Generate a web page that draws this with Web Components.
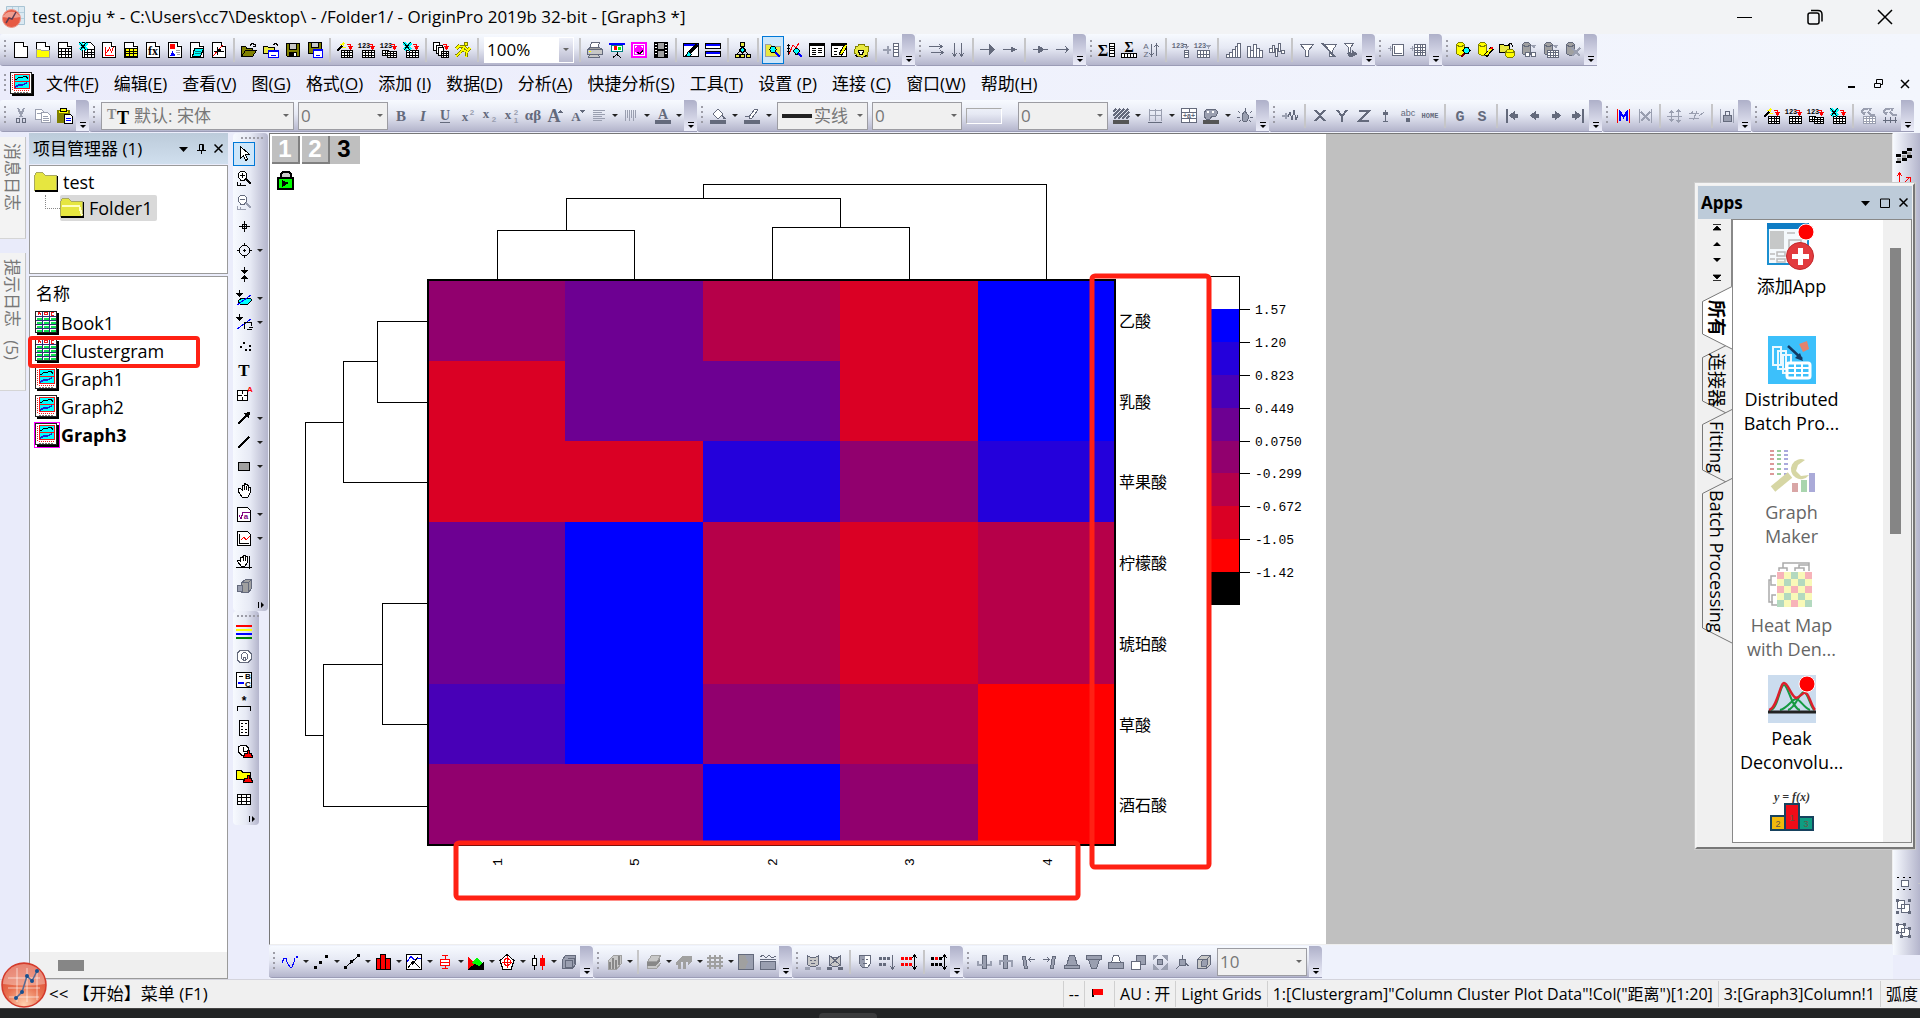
<!DOCTYPE html>
<html lang="zh-CN">
<head>
<meta charset="utf-8">
<title>OriginPro 2019b</title>
<style>
html,body{height:100%;margin:0}
body{font:17px/24px "Open Sans","Noto Sans CJK SC",sans-serif;color:#000;background:#ebedfb;overflow:hidden}
</style>
</head>
<body>
<origin-app></origin-app>
<script>
const COL={k:'#000',g:'#646a7c',d:'#9a9fb0',w:'#fff',y:'#ffff00',r:'#f00',b:'#00f',c:'#0ff',m:'#f0f',n:'none',o:'#808000',s:'#c8c8c8',e:'#e8e840',a:'#a0a0a0',G:'#0f0',v:'#800080',t:'#008080'};
const col=c=>COL[c]||c;
function shapes(s){
  return s.split(';').filter(Boolean).map(p=>{
    const a=p.split('|');
    if(a[0]==='T')return `<text x="${a[2]}" y="${a[3]}" font-size="${a[4]}" font-weight="${a[5]}" font-family="${a[7]||'Liberation Sans'}" fill="${col(a[1])}" stroke="none" text-anchor="middle">${a[6]}</text>`;
    return `<path stroke="${col(a[0])}" fill="${col(a[1])}" d="${a[2]}"${a[3]?` stroke-width="${a[3]}"`:''}/>`;
  }).join('');
}
const grid=(x,y,w,h,nx,ny,c='k',f='w')=>{
  let d=`M${x} ${y}h${w}v${h}h-${w}z`;
  for(let i=1;i<nx;i++)d+=`M${x+Math.round(w*i/nx)} ${y}v${h}`;
  for(let i=1;i<ny;i++)d+=`M${x} ${y+Math.round(h*i/ny)}h${w}`;
  return `${c}|${f}|${d};`;
};
const PAGE='k|w|M1.5 .5h9l4 4v11h-13z;k|w|M10.5 .5v4h4;';
const IMP='r|n|M10 2.5h3.5v3;r|r|M11.5 4.5h4l-2 2.5z;';
const CYL=(b,f)=>`${b}|${f}|M1.5 2.5v9l3 2h3l2-2v-9l-2-2h-4z;${b}|n|M1.5 2.5l2 1.5h4l2-1.5;`;
const XL='c|n|M1 1l7 7M8 1l-7 7|3;k|n|M.5 .5l7 8M7.5 .5l-7 8;';
const CUBE=f=>`g|${f}|M1.5 5.5l4-4h9v9l-4 4h-9z;g|n|M1.5 5.5h9v9M10.5 5.5l4-4;`;
const ICONS={
 new:PAGE,
 newfolder:PAGE+'a|y|M1.5 7.5h4l1 1h8v7h-13z',
 newbook:PAGE+grid(1.5,6.5,13,9,4,3),
 newexcel:'k|w|M3.5 .5h8l4 4v11h-12z;'+grid(5.5,7.5,10,8,3,3)+XL,
 newgraph:PAGE+'r|n|M4.5 5v8.5h8;r|n|M5.5 11l3-5 2 4 2-5;',
 newmatrix:PAGE+grid(2.5,6.5,12,8,3,3,'k','y'),
 newfx:PAGE+'T|k|8|13|12|bold|fx|Liberation Serif',
 newlayout:PAGE+'n|r|M3 2h5v5h-5z;n|b|M3 14l2.5-5 3 5z;a|n|M9 8.5h4M9 10.5h4M10 12.5h3;',
 newnote:PAGE+'k|c|M5.5 6.5h9l-3 8h-8z;t|n|M6 9.5h6M5.5 11.5h6;',
 new3d:PAGE+'r|n|M2 14l10-11;k|n|M3 9.5h10M6.5 5v8;n|k|M7 7h3v3h-3z;',
 open:'k|o|M.5 14.5v-10h4l1 1.5h6v3;k|o|M.5 14.5l4-6h11l-4 6z;k|n|M9 3.5l2-2 3 1v2M12 4.5h3;',
 opentpl:'k|e|M.5 11.5v-7h4l1 1h6v6z;k|n|M10 2.5l3-1 2 2;b|w|M5.5 8.5h10v7h-10z;b|n|M5.5 9.5h10;b|n|M8 13.5h5;',
 save:'k|o|M1.5 1.5h13v13h-12l-1-1z;k|s|M4.5 1.5h7v6h-7z;n|k|M4 10h8v5h-8z;n|w|M9 11h2v3h-2z;',
 savetpl:'k|o|M1.5 .5h13v11h-13z;k|s|M4.5 .5h7v5h-7z;b|w|M6.5 7.5h9v8h-9z;b|n|M6.5 8.5h9M9 13h4;',
 impwiz:grid(4.5,8.5,11,7,4,3)+'k|n|M0 9l5-5|2;y|n|M6 0v4M3 3l5-2M5 5h4;'+IMP,
 imp1:grid(3.5,8.5,12,7,4,3)+'T|k|5|6|7|bold|123|Liberation Mono;'+IMP,
 imp2:grid(1.5,8.5,6,5,2,2)+grid(6.5,9.5,9,6,3,3)+'T|k|5|6|7|bold|123|Liberation Mono;'+IMP,
 impxl:grid(3.5,8.5,12,7,4,3)+XL+IMP,
 reimp:'k|w|M.5 .5h6v8h-6z;k|w|M3.5 3.5h6v8h-6z;k|w|M5.5 5.5h5v8h-5z;'+grid(8.5,9.5,7,6,3,3)+IMP,
 run:'o|y|M9.5 .5h3v3h-3z;o|n|M9 5l-4 6-4 3M9 5l-5-1-3 3M8 8l4 2-1 5M9 5l4 3 2-2|3;y|n|M9 5l-4 6-4 3M9 5l-5-1-3 3M8 8l4 2-1 5M9 5l4 3 2-2|1.5;',
 print:'g|w|M4.5 .5h8l-2 6h-8z;g|s|M.5 7.5h15v5h-15z;g|a|M.5 7.5l3-2h9l3 2z;g|s|M2.5 12.5h9l1 3h-11z;n|y|M2 9h2v1h-2z;',
 slide:'b|n|M0 1.5h16|2;t|w|M2.5 3.5h11v6h-11z;n|r|M5 4h3v4h-3z;n|G|M9 5h3v3h-3z;k|n|M8.5 10v3M4 15.5l4-3 4 3;',
 ppt:'m|w|M1 1h14v14h-14z|2;m|n|M3.5 3.5h9v9h-9z;n|m|M4 8a4 4 0 1 1 8 0a4 4 0 1 1-8 0z;k|n|M6 10.5l3 1 3-3;',
 film:'k|k|M1.5 .5h13v15h-13z;n|a|M5 1h6v6h-6zM5 9h6v6h-6z;w|n|M2 2.5h2M2 5.5h2M2 8.5h2M2 11.5h2M12 2.5h2M12 5.5h2M12 8.5h2M12 11.5h2;',
 design:'k|w|M.5 1.5h15v13h-15z;b|n|M1 2.5h14|2;k|c|M2.5 14.5l3-5 3 3-2 2z;k|n|M6 11l8-8|3;',
 windows:'k|w|M.5 1.5h15v5h-15zM.5 9.5h15v5h-15z;b|n|M1 2.5h14M1 10.5h14|2;',
 tree:'k|e|M5.5 .5h4v4h-4zM.5 12.5h4v3h-4zM5.5 12.5h4v3h-4zM11.5 12.5h4v3h-4z;k|c|M7.5 5l3 3-3 3-3-3z;k|n|M7.5 11v2M5 9l-3 3M10 9l3 3;',
 find:'a|e|M.5 14.5v-12h5l1 1.5h9v10z;b|n|M10 10l5 5|2;k|c|M4.5 7.5l2-3h3l2 3-2 3h-3z;',
 findplot:'k|n|M1.5 2v11M0 3.5h3M0 6.5h3M0 9.5h3;r|n|M2 12l4-9 3 3 3-5;b|n|M11 11l4 4|2;k|c|M6.5 9l2-3h2l2 3-2 3h-2z;',
 results:'k|w|M.5 1.5h15v13h-15z;k|n|M.5 3h15|2;k|n|M3 6.5h4M9 6.5h4M3 8.5h4M9 8.5h4M3 10.5h4M9 10.5h4M3 12.5h4;',
 script:'k|w|M.5 1.5h15v13h-15z;k|n|M.5 3h15|2;k|n|M3 6.5h4M3 9.5h3M3 12.5h3;k|n|M15 3l-6 10|4;y|n|M15 3l-5 9|2;',
 gear:'o|e|M1 8l2-2-1-2 3 0 1-2 2 1 3-1 1 2 3 0 0 3 1 2-2 2v3h-3l-2 2-2-2-3 1-1-3-2-1z;k|w|M5.5 8.5h5l-1 4h-3z;k|n|M2 13l3 2M11 15l3-2;',
 addcol:'d|n|M0 7.5h8M4.5 4v8|2;g|w|M10.5 1.5h5v13h-5zM10.5 4.5h5M10.5 7.5h5M10.5 10.5h5;',
 rows:'g|n|M1 4.5h13M11 2l3 2.5-3 2.5M3 10.5h12M12 8l3 2.5-3 2.5;',
 cols:'g|n|M4.5 1v13M2 11l2.5 3 2.5-3M11.5 1v13M9 11l2.5 3 2.5-3;',
 arrR:'g|n|M0 7.5h10;n|g|M9 1l6 6.5-6 6.5z;',
 arrr:'g|n|M1 7.5h10;n|g|M9 4.5l6 3-6 3z;',
 arrR2:'g|n|M1 7.5h15;n|g|M6 3.5l7 4-7 4z;',
 arrr2:'g|n|M2 7.5h12M11 4l3 3.5-3 3.5;',
 sumcol:'T|k|4|14|16|bold|Σ|Liberation Serif;k|w|M10.5 1.5h5v13h-5zM10.5 4.5h5M10.5 6.5h5M10.5 8.5h5M10.5 11.5h5;',
 sumrow:'T|k|8|10|14|bold|Σ|Liberation Serif;k|w|M.5 11.5h15v4h-15zM3.5 11.5v4M6.5 11.5v4M9.5 11.5v4M12.5 11.5v4;',
 sort:'T|g|3|7|8|normal|A;T|g|3|15|8|normal|Z;g|n|M8.5 2v12M6.5 11l2 3 2-3M13.5 2v12M11.5 5l2-3 2 3;',
 n1:'T|g|5|6|7|bold|123|Liberation Mono;g|n|M10 2.5h3v3;n|d|M11 4h5l-2.5 3z;g|w|M11.5 8.5h4v7h-4zM11.5 10.5h4M11.5 12.5h4;',
 n2:'T|g|5|6|7|bold|123|Liberation Mono;n|d|M11 3h5l-2.5 4z;'+grid(2.5,8.5,12,7,4,2,'g'),
 b1:'g|w|M1.5 12.5h3v3h-3zM4.5 10.5h3v5h-3zM7.5 7.5h3v8h-3zM10.5 4.5h2v11h-2zM12.5 1.5h3v14h-3z;',
 b2:'g|w|M.5 4.5h3v11h-3zM3.5 8.5h3v7h-3zM6.5 2.5h3v13h-3zM9.5 6.5h3v9h-3zM12.5 8.5h3v7h-3z;',
 b3:'g|w|M.5 6.5h3v4h-3zM3.5 3.5h2v7h-2zM6.5 6.5h2v8h-2zM9.5 1.5h2v8h-2zM12.5 8.5h3v3h-3z;',
 fil:'g|w|M1.5 2.5h13l-5 6v6h-3v-6z;',
 fil2:'g|w|M3.5 2.5h12l-4 6v6h-3v-6z;g|n|M1 1l13 14|2;',
 fil3:'g|w|M1.5 1.5h9l-3 4v5h-2v-5z;n|g|M4 11h5v-3l6 4-6 3h-3z;',
 addlay:'d|n|M0 6.5h4M2.5 4v5;g|w|M4.5 2.5h11v11h-11z;g|n|M6.5 4v7.5h7;',
 addgrid:'d|n|M0 6.5h4M2.5 4v5;'+grid(4.5,2.5,11,11,4,4,'g'),
 db1:CYL('o','y')+'k|c|M8 8.5l2-3h3l2 3-2 3h-3z;#800000|n|M9 12l-3 3|2;',
 db2:CYL('o','y')+'k|n|M15.5 6l-7 8|4;y|n|M14 7l-5 6|2;r|n|M15.5 5l-1.5 2|2;',
 db3:'k|e|M.5 10.5v-8h4l1 1h5v7z;k|n|M9 2.5l3-1 2 3;o|y|M6.5 9.5l2-2h5l2 2v4l-2 2h-5l-2-2z;o|n|M6.5 9.5l2 1h5l2-1;',
 db4:CYL('g','a')+'n|d|M10 3h5l-2 4z;g|w|M4.5 10.5h4v4h-4zM10.5 10.5h4v4h-4z;g|n|M8 12h3;',
 db5:CYL('g','a')+'n|d|M10 3h5l-2 4z;'+grid(4.5,8.5,11,7,4,3,'g'),
 db6:CYL('g','a')+'d|n|M7 6l8 8M15 6l-8 8|2;',
 cut:'d|n|M5 0l4 9M11 0l-4 9|2;g|n|M3.5 10.5h3v4h-3zM9.5 10.5h3v4h-3z;',
 copy:'d|w|M.5 1.5h6l3 3v7h-9z;d|w|M6.5 4.5h6l3 3v7h-9z;d|n|M8 8.5h5M8 10.5h6M8 12.5h6M2 5.5h4;',
 paste:'o|o|M.5 2.5h12v12h-12z;n|y|M2 3h9v2h-9z;k|y|M3.5 .5h6v3h-6z;k|w|M7.5 6.5h6l2 2v7h-8z;b|n|M9 10.5h5M9 12.5h5;',
 tB:'T|g|8|13|15|bold|B|Liberation Serif',
 tI:'T|g|8|13|15|bold|I|Liberation Serif',
 tU:'T|g|8|12|14|bold|U|Liberation Serif;g|n|M3 14.5h10;',
 tsup:'T|g|6|13|13|bold|x|Liberation Serif;T|d|13|7|8|bold|2;',
 tsub:'T|g|5|10|13|bold|x|Liberation Serif;T|d|13|14|8|bold|2;',
 tss:'T|g|5|11|13|bold|x|Liberation Serif;T|d|13|7|8|bold|2;T|d|13|15|8|bold|1;',
 tab:'T|g|8|12|15|bold|αβ|Liberation Serif;',
 tA:'T|g|7|14|18|bold|A|Liberation Serif;n|g|M11 5l2.5-3 2.5 3z;',
 ta:'T|g|7|13|13|bold|A|Liberation Serif;n|g|M11 2h5l-2.5 3z;',
 al:'d|n|M2 2.5h12M2 4.5h9M2 6.5h12M2 8.5h9M2 10.5h12M2 12.5h9;',
 vl:'d|n|M2.5 2v11M4.5 2v8M6.5 2v11M8.5 2v8M10.5 2v11M12.5 2v8;',
 fc:'T|g|8|11|14|bold|A|Liberation Serif;n|g|M0 12h16v4h-16z;',
 fill:'g|w|M3 6l5-5 5 5-5 5z;n|g|M12 6l4 5h-3z;n|g|M0 12h16v4h-16z;',
 pen:'g|w|M5 9l6-8 3 1-6 8-3 1z;g|n|M1 8.5h4;n|g|M0 12h16v4h-16z;',
 hatch:'g|n|M0 4l3-3M0 8l7-7M1 11l10-10M5 11l10-10M9 11l7-7M13 11l3-3|1.5;n|#555|M0 12h16v4h-16z;',
 bord:'d|n|M2.5 1v12M8.5 1v12M14.5 1v12M2 2.5h12M2 7.5h12;g|n|M1 14.5h14;',
 cells:'g|w|M.5 .5h15v14h-15zM.5 4.5h15M.5 10.5h15M8.5 .5v4M8.5 10.5v4;T|g|8|10|7|bold|+a+;',
 pal:'g|d|M1 5l3-4h8l3 3-2 4h-4l-2 3h-4l-2-3z;n|w|M4 3h2v2h-2zM9 3h2v2h-2z;n|#555|M0 12h16v4h-16z;',
 bulb:'g|d|M5 7l3-4 3 4v4l-1 2h-4l-1-2z;g|n|M8.5 0v3M1 3l2 2M15 3l-2 2M0 9.5h3M13 9.5h3M2 14l2-2M14 14l-2-2;',
 wave:'d|n|M0 7.5h6M3.5 5v6|2;g|n|M6 9l2-5 2 8 2-10 2 10 2-5;',
 X:'g|n|M3 2l10 11M13 2l-10 11|2;',Y:'g|n|M3 2l5 6 5-6M8 8v6|2;',Z:'g|n|M3 3h10l-10 10h10|2;',
 err:'g|n|M7.5 2v11M5 13.5h5;n|g|M5 4h5v3h-5z;',
 abc:'T|g|8|8|9|normal|abc;n|g|M6 10h4v4h-4z;',
 home:'T|g|8|10|7|bold|HOME|Liberation Mono;',
 G:'T|g|8|13|15|bold|G|Liberation Mono;',S:'T|g|8|13|15|bold|S|Liberation Mono;',
 first:'g|n|M3 1v14|2;n|g|M5 7.5l6-5v3h3v4h-3v3z;',
 prev:'n|g|M4 7.5l6-5v3h3v4h-3v3z;',next:'n|g|M13 7.5l-6-5v3h-3v4h3v3z;',
 last:'g|n|M13 1v14|2;n|g|M11 7.5l-6-5v3h-3v4h3v3z;',
 M:'r|n|M2.5 1v14M14.5 1v14;b|n|M5 13v-9l3.5 5 3.5-5v9|2;',
 Xm:'d|n|M2.5 1v14M14.5 1v14;d|n|M4 4l9 9M13 4l-9 9|2;',
 mv1:'d|n|M4.5 2v12M0 8.5h9M11.5 1v14M9 8.5h6;n|d|M2 5l2.5-3 2.5 3zM2 11l2.500 3 2.500-3zM9 4l2.5-3 2.5 3zM9 12l2.5 3 2.5-3z;',
 mv2:'d|n|M0 5.5h10M0 10.5h10M8 3l-4 9M4 3l-2 3M10 8l5-4;',
 lock:'d|n|M1.5 1v14M14.5 1v14;g|d|M4.5 7.5h8v6h-8z;g|n|M6.5 7v-3l1-1h2l1 1v3;',
 cyc1:'d|n|M1 4l3-3h4M8 4l3 3h4|2;n|d|M8 0h4l-2 4zM1 4h5l-2 4z;'+grid(3.5,8.5,12,7,4,3,'d'),
 cyc2:'d|n|M1 4l3-3h4M8 4l3 3h4|2;n|d|M8 0h4l-2 4zM1 4h5l-2 4z;g|n|M3.5 9v6M8.5 9v6M13.5 9v6M1 12.5h14;',
 ptr:'k|w|M4.5 .5v12l3-3 2 5 2-1-2-5h4z;',
 zin:'k|w|M2.5 4l2-3h4l2 3v3l-2 3h-4l-2-3z;k|n|M4 5.5h5M6.5 3v5;k|n|M10 9l5 5|2;k|n|M1.5 12v3h8M4.5 13v2;',
 zout:'g|w|M2.5 4l2-3h4l2 3v3l-2 3h-4l-2-3z;g|n|M4 5.5h5;d|n|M10 9l5 5|2;d|n|M1.5 12v3h8M4.5 13v2;',
 cross:'k|n|M8.5 3v11M3 8.5h11M6.5 6.5h4v4h-4z;',
 target:'k|n|M3.5 6.5l3-3h4l3 3v4l-3 3h-4l-3-3zM8.5 1v3M8.5 13v3M1 8.5h3M13 8.5h3M7 8.5h3M8.5 7v3;',
 dsel:'k|n|M8.5 1v4M8.5 12v4;n|k|M5 4h7l-3.5 4zM5 13h7l-3.5-4z;',
 msk:'k|n|M3.5 0v5;n|k|M0 3h7l-3.5 4z;k|c|M2 11l4-3h8l2 2-4 4h-8z;b|n|M1 15l14-10;',
 msk2:'k|n|M3.5 0v5;n|k|M0 3h7l-3.5 4z;b|n|M1 15l14-10;k|n|M8.5 8v7M8.5 8.5h7v3M12.5 13h4M11 15.5h5;',
 dots:'n|k|M7 4h2v2h-2zM4 8h2v2h-2zM13 7h2v2h-2zM9 11h2v2h-2zM13 11h2v2h-2z;',
 T:'T|k|8|14|17|bold|T|Liberation Serif;',
 lab:'k|w|M1.5 4.5h10v10h-10z;k|n|M1.5 9.5h4M8 9.5h4M6.5 4v4M6.5 11v4;T|r|14|6|8|bold|A;',
 arw:'k|n|M2 14l9-9|1.5;n|k|M7 3l7-1-1 7z;',
 line:'k|n|M2 14l11-11|1.5;',
 rect:'k|a|M2.5 4.5h11v8h-11z;',
 hand:'k|w|M2.5 6.5h2l2 2v-5.5h1.500v-1.500h1.500v1h1.500v1h1.500v1.500h1.500v6l-2 4h-6l-4-6z;k|n|M8.5 3v5M10.5 4v4M12.5 5v4;',
 sqa:'k|w|M1.5 1.5h10l3 3v11h-13z;v|n|M3 9l2 4 2-7h7;T|v|10|13|8|bold|a;',
 gr:'k|w|M1.5 1.5h10l3 3v11h-13z;k|n|M3.5 4v9.5h9;r|n|M5 10l3-3 2 3 4-4;',
 pan:'k|w|M1.5 6.5h2l1 1v-4h1.500v-1.500h1.500v-1h2v1h1.500v7l-2 3h-4l-3-4z;k|n|M7.5 3v4M9.5 3v4M13.5 2v13M0 13.5h16;',
 cube:'g|a|M5.5 4.5l4-3h6v9l-3 4h-7z;g|n|M5.5 4.5h7v10M12.5 4.5l3-3;g|d|M1 7h5v6h-5z;',
 flag4:'r|n|M0 2h16|2;y|n|M0 6h16|2;b|n|M0 10h16|2;#008000|n|M0 14h16|2;',
 rad:'g|w|M4 2.5h8l3 3v6l-3 3h-8l-3-3v-6z;g|n|M5.5 6.5l2-2h2l2 2v4l-2 2h-2l-2-2zM7.5 9.5h2v3h-2z;',
 leg:'k|w|M.5 .5h15v15h-15z;k|n|M3 4.5h4;b|n|M2 10.5h6|2;T|k|12|7|8|bold|B;T|k|12|15|8|bold|C;',
 ast:'T|k|8|9|12|bold|*;k|n|M1.5 15v-5h13v5;',
 note:'k|w|M3.5 .5h9v15h-9z;k|n|M5 3.5h2M9 3.5h2M5 6.5h2M5 9.5h2M9 9.5h2M5 12.5h2M9 12.5h2;',
 clk:'k|w|M2.5 3l3-2h4l3 3v4l-3 3h-4l-3-3z;k|n|M7.5 3v4h3;k|r|M8.5 9.5h3v-3h2v3h2l1 4h-9z;',
 fst:'k|y|M.5 11.5v-9h5l1 2h8v7z;k|r|M8.5 10.5h3v-3h2v3h2l1 4h-9z;',
 tbl:grid(1.5,2.5,13,10,3,3),
 curve:'b|n|M0 9l2-5h2l1 4 3 5h2l2-5 1-4;n|b|M14 2h2v2h-2z;',
 scat:'n|k|M1 12h3v3h-3zM6 7h3v3h-3zM12 1h3v3h-3z;',
 lsc:'k|n|M2 13l12-11;n|k|M0 12h3v3h-3zM6 6h3v3h-3zM13 0h3v3h-3z;',
 bars:'k|r|M1.5 4.5h4v11h-4zM5.5 .5h5v15h-5zM10.5 4.5h5v11h-5z;',
 mix:'k|w|M.5 .5h15v15h-15z;b|n|M1 8l4-6 3 4 4-2 3 1;k|n|M2 14l5-7 7 7M12 3l-6 8;',
 box:'r|w|M3.5 5.5h9v6h-9zM3.5 8.5h9;r|n|M8.5 1v4M8.5 11v4M5 1.5h6M5 14.5h6;',
 area:'n|r|M0 3l6 6 5 7h-11z;n|G|M4 9l5-6 5 6-4 4z;n|k|M0 15l7-5 4 2 5-5v9h-16z;',
 radar:'k|w|M8 .5l7 6-3 9h-8l-3-9z;r|n|M5 6l3-2 3 2v4l-3 2-3-2zM8 2v12M3 8h10;',
 stock:'k|w|M2.5 4.5h4v7h-4z;k|n|M4.5 1v3M4.5 12v4;r|n|M12.5 1v15;n|r|M10 4h5v8h-5z;',
 cubes:'g|d|M1.5 5.5l3-4h10v9l-3 4h-10z;g|n|M4.5 6.5h7v7h-7zM7 4h6v6;',
 c1:'a|s|M2.5 6.5l5-5h8v8l-5 6h-8z;n|#888|M3 8h2v7h-2zM6 4h2v11h-2zM9 6h2v9h-2zM12 2h2v9h-2z;',
 c2:'a|s|M2.5 7.5l4-6h9l-3 6zM2.5 7.5v7h9l4-5;n|#888|M2 8h10l3-4v3l-4 5h-9z;',
 c3:'n|a|M0 8l6-6h10v5l-4 5v-4h-2v7h-3v-7h-2v7h-3v-4h-2z;',
 c4:'a|n|M3 1v14M8 1v14M13 1v14M0 4h16M0 8h16M0 12h16|2;',
 c5:'g|d|M.5 .5h15v15h-15z;n|a|M1 1h6l3 7-3 7h-6z;',c6:'g|d|M.5 7.5h15v8h-15z;g|n|M0 3l3-2 3 3 3-3 3 3 4-2M0 5.5h16;',
 cat:'g|s|M2.5 1.5l3 2h5l3-2v9l-3 2h-5l-3-2z;g|n|M5 6h2M9 6h2M6 9.5h4;n|d|M0 13h5v3h-5zM11 13h5v3h-5z;',
 catx:'g|s|M2.5 1.5l3 2h5l3-2v9l-3 2h-5l-3-2z;g|n|M2 1l12 11M14 1l-12 11;n|g|M0 13h5v3h-5zM11 13h5v3h-5z;',
 mask:'g|w|M2.5 1.5h11v8l-3 4h-5l-3-4z;n|d|M3 2h5v11h-3l-2-3z;g|n|M5 5h2M9 5h2M6 9.5h4;',
 mg:'n|g|M0 3h3v3h-3zM4 3h3v3h-3zM8 3h3v3h-3zM0 9h3v3h-3zM4 9h3v3h-3z;g|n|M13.5 1v14M11 12l2.5 3 2.5-3;',
 mr:'n|r|M0 3h3v3h-3zM4 3h3v3h-3zM8 3h3v3h-3zM0 9h3v3h-3zM4 9h3v3h-3zM8 9h3v3h-3z;k|n|M13.5 1v14M11 4l2.5-3 2.5 3M11 12l2.5 3 2.5-3;',
 mk:'n|k|M0 3h3v3h-3zM8 3h3v3h-3zM0 9h3v3h-3zM4 9h3v3h-3zM8 9h3v3h-3z;n|r|M4 3h3v3h-3z;k|n|M13.5 1v14M11 4l2.5-3 2.5 3M11 12l2.5 3 2.5-3;',
 r1:'g|d|M6.5 1.5h4v13h-4z;d|n|M2 7v4h5M11 11h4v-4|2;',r2:'g|d|M5.5 1.5h4v13h-4z;d|n|M2 11v-4h12v6|2;',
 r3:'g|d|M2.5 2.5h3l2 12h-3z;g|n|M9 5.5h6M11 3l-2 2.5 2 2.5;',r4:'g|d|M10.5 2.5h3l-2 12h-3z;g|n|M1 5.5h6M5 3l2 2.5-2 2.5;',
 r5:'g|d|M5.5 1.5h5l3 10h-11z;g|d|M.5 11.5h15v3h-15z;',r6:'g|d|M.5 1.5h15v4h-15z;g|d|M2.5 5.5h11l-3 9h-5z;',
 r7:'g|w|M5.5 1.5h5l2 7h-9z;g|d|M.5 8.5h15v6h-15z;',r8:'g|d|M6.5 1.5h9v9h-9z;g|w|M1.5 7.5h9v8h-9z;',
 r9:'d|d|M1 1h5l-5 5zM15 1h-5l5 5zM1 15h5l-5-5zM15 15h-5l5-5z;g|d|M5.5 5.5h5v5h-5z;',
 r10:'g|d|M5.5 5.5h6v6h-6z;g|n|M8.5 1v5M11 9l4 3M6 11l-4 4;',r11:CUBE('s')+'g|d|M5.5 7.5l2-2h4v5l-2 2h-4z;',
 steps:'n|k|M11 1h5v3h-5zM6 4h5v3h-5zM0 7h5v3h-5zM11 8h5v3h-5zM6 11h5v3h-5zM0 14h5v2h-5z;n|a|M6 8h4v3h-4zM1 11h4v3h-4zM11 5h4v3h-4z;',
 redar:'r|n|M3.5 14v-12M1 5l2.5-3 2.5 3M7 13l6-6M10 6.5h4v4;',
 obj:'g|w|M5.5 5.5h7v6h-7z;k|n|M1 2.5h2M7 2.5h2M13 2.5h2M1 14.5h2M7 14.5h2M13 14.5h2;',
 grp:'g|w|M1.5 1.5h7v8h-7zM5.5 5.5h8v8h-8z;n|g|M0 0h3v3h-3zM12 0h3v3h-3zM0 12h3v3h-3zM12 12h3v3h-3z;',
 ugrp:'g|w|M1.5 1.5h7v8h-7zM5.5 5.5h8v8h-8z;n|g|M0 0h3v3h-3zM7 0h3v3h-3zM0 8h3v3h-3zM12 12h3v3h-3zM4 12h3v3h-3zM12 4h3v3h-3z;'
};
const icon=(n,s=16)=>`<svg width="${s}" height="${s}" viewBox="0 0 16 16" fill="none" shape-rendering="crispEdges" aria-hidden="true"${n==='tI'?' font-style="italic"':''}>${shapes(ICONS[n]||'')}</svg>`;
const define=(name,render)=>customElements.define(name,class extends HTMLElement{
  connectedCallback(){ if(!this.shadowRoot) this.attachShadow({mode:'open'}).innerHTML=render(this); }
});

/* 24px window icons used by the project list and the menu bar */
const SHEET=(()=>{let s='<path d="M2 2h22v22H2z" fill="#000"/><path d="M.5 .5h21v21H.5z" fill="#fff" stroke="#222"/><path d="M2 2.500h5M9 2.500h5M16 2.500h4" stroke="none"/>';
 for(let y=6;y<21;y+=4)for(let x=1;x<21;x+=7)s+=`<path fill="#10e050" d="M${x+1} ${y+1}h5v2h-5z"/>`;
 s+='<path d="M1 5.500h20M1 9.500h20M1 13.500h20M1 17.500h20M7.500 1v20M14.500 1v20" stroke="#30307a"/><path d="M3 4V2.500L4 1.500l1 1V4M9.500 4V1.500H12v2H9.500M19 1.500h-3v2.500h3" stroke="#f01818" fill="none"/>';return s})();
const CHART='<path d="M2 2h22v22H2z" fill="#000"/><path d="M.5 .5h21v21H.5z" fill="#fff" stroke="#222"/><path d="M4 2.500h15v14H4z" fill="#0ff" stroke="#f01818"/><path d="M4 9.500h15" stroke="#f01818"/><path d="M5 7h2l2-2h2l1 1 2-2h2l2 3" fill="none" stroke="#000"/><path d="M5 15l4-2h3l5-2" fill="none" stroke="#2020d0" stroke-width="1.500"/><path d="M2.500 3v15M4 18.500h15" stroke="#f01818" stroke-dasharray="1 1"/><path d="M4 20h15" stroke="#777" stroke-dasharray="2 1"/>';
define('window-icon',el=>`<style>:host{display:block;flex:none}svg{display:block}:host([active]) svg{outline:1px solid #f0f}</style><svg width="24" height="24" shape-rendering="crispEdges">${el.getAttribute('kind')==='book'?SHEET:CHART}</svg>`);

/* a run of icon buttons; "|" is a divider and a trailing ">" adds a menu arrow */
define('tool-set',el=>{
  const html=el.getAttribute('items').split(/\s+/).filter(Boolean).map(t=>{
    if(t==='|')return '<i class="sep"></i>';
    const on=t[0]==='!'; if(on)t=t.slice(1);
    const arrow=t.endsWith('>'); if(arrow)t=t.slice(0,-1);
    return `<button aria-label="${t}" class="${on?'on':''}">${icon(t)}</button>${arrow?'<i class="arr"></i>':''}`;
  }).join('');
  return `<style>
  :host{display:flex;align-items:center;--aw:10px}
  :host([wide]){--aw:12px}
  :host([narrow]){--aw:9px}
  button{width:22px;height:28px;flex:none;padding:0;border:1px solid transparent;background:none;display:flex;align-items:center;justify-content:center}
  button.on{border-color:#0078d7;background:#cde6fa}
  svg{overflow:visible;display:block;flex:none}
  .sep{width:2px;height:24px;margin:0 3px;background:#c6c6c8;flex:none}
  .arr{width:var(--aw);flex:none;display:flex;justify-content:center}
  .arr::after{content:"";border:3px solid transparent;border-top-color:#222;border-bottom:0}
  :host([vertical]){display:grid;grid-template-columns:22px 10px;justify-content:start}
  :host([vertical]) button{grid-column:1;height:24px}
  :host([vertical]) .arr{grid-column:2}
  :host([vertical]) .sep{width:16px;height:1px;margin:3px}
  </style>${html}`;
});
define('tool-bar',()=>`<style>
  :host{display:flex;height:32px;flex:none;background:linear-gradient(#f7faff,#e6e9f4 45%,#b4b5cc);border-bottom:1px solid #9b9cb6;border-radius:3px 0 0 3px;align-items:center;box-sizing:border-box}
  .grip{width:10px;align-self:stretch;flex:none;display:flex;align-items:center;justify-content:center}
  .grip::before{content:"";width:2px;height:20px;background:repeating-linear-gradient(#9c9ca6 0 2px,transparent 2px 5px)}
  .cap{width:13px;align-self:stretch;flex:none;background:linear-gradient(#aeb0c9,#ecedf9);border-radius:0 4px 0 0;display:flex;flex-direction:column;align-items:center;justify-content:flex-end;gap:2px;padding-bottom:3px;box-sizing:border-box}
  .cap::before{content:"";width:6px;height:1px;background:#000}
  .cap::after{content:"";border:3px solid transparent;border-top-color:#000;border-bottom:0}
  :host([vertical]){flex-direction:column;height:auto;align-items:flex-start;border:0;border-radius:4px;background:linear-gradient(90deg,#f7faff,#e6e9f4 50%,#b4b5cc)}
  :host([vertical]) .grip{width:auto;height:9px;padding-left:3px}
  :host([vertical]) .grip::before{width:22px;height:2px;background:repeating-linear-gradient(90deg,#9c9ca6 0 2px,transparent 2px 4px)}
  :host([vertical]) .cap{width:auto;height:13px;background:none;flex-direction:row;padding:0 4px;align-items:center;align-self:stretch}
  :host([vertical]) .cap::before{width:1px;height:6px}
  :host([vertical]) .cap::after{border:3px solid transparent;border-left-color:#000;border-right:0}
  </style><span class="grip"></span><slot></slot><span class="cap"></span>`);
define('combo-box',el=>`<style>
  :host{display:flex;flex:none;width:var(--w);height:28px;box-sizing:border-box;border:1px solid #9c9ca2;background:#f0f0f0;color:#777;margin:0 2px;align-items:center}
  :host([live]){background:#fff;color:#000;border-color:#fff;height:26px}
  label{display:flex;align-items:center;width:100%;height:100%}
  select{flex:1;min-width:0;height:100%;appearance:none;border:0;background:none;color:inherit;font:inherit;padding:0 2px;margin:0;opacity:1}
  .a{width:14px;flex:none;display:flex;justify-content:center;align-self:stretch;align-items:center}
  :host([live]) .a{background:linear-gradient(#f0f2fa,#babbd0)}
  .a::after{content:"";border:3px solid transparent;border-top-color:#666;border-bottom:0}
  ::slotted(*){flex:none}
  </style><label><slot></slot><select aria-label="${el.getAttribute('label')}"><option>${el.getAttribute('value')}</option></select><span class="a"></span></label>`);

define('origin-logo',()=>`<style>:host{display:block}svg{display:block;width:100%;height:100%}</style>
 <svg viewBox="0 0 46 46"><defs><radialGradient id="g" cx=".5" cy=".95" r="1"><stop offset="0" stop-color="#ffd2b0"/><stop offset=".45" stop-color="#e8704f"/><stop offset="1" stop-color="#d83a22"/></radialGradient></defs>
 <circle cx="23" cy="23" r="22" fill="url(#g)" stroke="#d33a2c" stroke-width="1.500"/><path d="M2 22a21 20 0 0 1 42 0q-18 3-42 0z" fill="#fff" opacity=".35"/>
 <path d="M16 6v34M26 6v34M36 8v30M7 16h32M7 26h32M8 35h30" stroke="#fff" opacity=".6" fill="none"/><path d="M15 36l6-6 5-16 5 5 5-10" stroke="#566b94" fill="none" stroke-width="1.500"/><g fill="#17508e"><circle cx="15" cy="36" r="2"/><circle cx="21" cy="30" r="2"/><circle cx="26" cy="14" r="2"/><circle cx="31" cy="19" r="2"/><circle cx="36" cy="9" r="2"/></g></svg>`);

define('title-bar',()=>`<style>
 :host{display:flex;align-items:center;height:34px;flex:none;background:#f2f3f5}
 .ic{display:flex;width:32px;flex:none}
 h1{font:inherit;font-size:17px;margin:0;flex:1;white-space:nowrap;overflow:hidden}
 button{width:70px;height:34px;border:0;background:none;padding:0;display:flex;align-items:center;justify-content:center}
 </style><span class="ic"><svg width="26" height="24"><path d="M6.500 1.500h18v18h-18z" fill="#dbe9f2" stroke="#a9c4d4"/><path d="M12.500 2v17M18.500 2v17M7 7.500h17M7 13.500h17" stroke="#b5cfdd"/><circle cx="11.500" cy="13.500" r="9" fill="#e65a44" stroke="#e9958a"/><path d="M3 12a9 8 0 0 1 17 0q-8 2-17 0z" fill="#fff" opacity=".4"/><path d="M6 18l3-5 3 1 4-7" fill="none" stroke="#5c3b52" stroke-width="1.500"/></svg></span><h1>test.opju * - C:\\Users\\cc7\\Desktop\\ - /Folder1/ - OriginPro 2019b 32-bit - [Graph3 *]</h1>
 <button aria-label="最小化"><svg width="16" height="16"><path d="M0 8.500h15" stroke="#000"/></svg></button>
 <button aria-label="还原"><svg width="16" height="16" fill="none" stroke="#000" stroke-width="1.500"><rect x="1" y="4" width="11" height="11" rx="2"/><path d="M4 1.500h7q4 0 4 4v7"/></svg></button>
 <button aria-label="关闭"><svg width="16" height="16"><path d="M1 1l14 14M15 1L1 15" stroke="#000" stroke-width="1.500"/></svg></button>`);

define('menu-bar',()=>{
 const m=[['文件','F'],['编辑','E'],['查看','V'],['图','G'],['格式','O'],['添加 ','I'],['数据','D'],['分析','A'],['快捷分析','S'],['工具','T'],['设置 ','P'],['连接 ','C'],['窗口','W'],['帮助','H']];
 return `<style>
 :host{display:flex;align-items:center;height:33px;flex:none;background:linear-gradient(90deg,#ebecfb,#f3f6fd)}
 .grip{width:2px;height:20px;margin:0 4px;background:repeating-linear-gradient(#9c9ca6 0 2px,transparent 2px 5px)}
 nav{display:flex;gap:15px;flex:1;margin-left:12px}
 nav button,.w button{border:0;background:none;padding:0;font:inherit;font-size:17px;color:#000;white-space:pre}
 u{text-underline-offset:2px}
 .w{display:flex;gap:15px;padding-right:10px;align-items:center}.w button{display:flex}
 </style><span class="grip"></span><window-icon></window-icon><nav>${m.map(([a,b])=>`<button>${a}(<u>${b}</u>)</button>`).join('')}</nav>
 <span class="w"><button aria-label="最小化"><svg width="12" height="12"><path d="M2 9h7" stroke="#000" stroke-width="2"/></svg></button><button aria-label="还原"><svg width="12" height="12" fill="none" stroke="#000"><path d="M1.500 5.500h6v4h-6zM3.500 5v-3.500h6v5H8"/></svg></button><button aria-label="关闭"><svg width="10" height="10"><path d="M1 1l8 8M9 1L1 9" stroke="#000" stroke-width="1.500"/></svg></button></span>`;
});

define('side-tabs',()=>`<style>
 :host{display:flex;flex-direction:column;gap:14px;width:27px;flex:none;padding-top:4px;background:#e9ebfa}
 button{writing-mode:vertical-rl;text-orientation:sideways;border:0;border-right:1px solid #c5c5c5;border-bottom:1px solid #d5d5d5;background:#f3f3f3;color:#777;font:inherit;font-size:17px;line-height:26px;padding:6px 0;width:26px;height:102px;text-align:left;white-space:pre}
 button+button{height:138px}
 </style><button>消息日志</button><button>提示日志   (5)</button>`);

define('folder-icon',el=>`<style>:host{display:block;flex:none}svg{display:block}</style><svg width="24" height="20" shape-rendering="crispEdges"><path d="M.5 3.500l2-3h6l3 3h11v15h-22z" fill="#e6e640" stroke="#a8a860"/><path d="M1 19h22.500V4" stroke="#000" stroke-width="2" fill="none"/>${el.hasAttribute('open')?'<path d="M2 7.500h17l3 10" fill="none" stroke="#ffffc0" stroke-width="2"/>':''}</svg>`);

define('project-panel',()=>{
 const rows=[['book','Book1'],['book','Clustergram'],['graph','Graph1'],['graph','Graph2'],['graph','Graph3']];
 return `<style>
 :host{display:flex;flex-direction:column;width:199px;flex:none;margin:0 5px 0 2px;font-size:18px}
 header{display:flex;align-items:center;height:31px;background:linear-gradient(#bccbda,#d0dfee);gap:8px;padding:0 5px 0 4px;font-size:17px}
 h2{font:inherit;margin:0;flex:1}
 header button{border:0;background:none;padding:0;display:flex}
 .tree,.list{background:#fff;border:1px solid #9a9a9a;box-sizing:border-box}
 .tree{height:109px;margin:1px 0 2px;padding:3px 4px;flex:none}
 .node{display:flex;align-items:center;gap:5px;height:26px}
 .kid{display:flex;height:26px}
 .kid i{width:14px;height:13px;margin-left:11px;border:1px dotted #888;border-width:0 0 1px 1px}
 .sel{background:#d9d9d9;padding:0 5px 0 0;border-radius:2px}
 .list{flex:1;display:flex;flex-direction:column;position:relative}
 .list b.h{font-weight:normal;font-size:17px;height:32px;line-height:33px;padding-left:6px}
 ul{list-style:none;margin:0;padding:0 0 0 5px;flex:1}
 li{display:flex;align-items:center;gap:2px;height:28px}
 li:last-child{font-weight:bold}
 .sb{height:26px;background:#f0f0f0;display:flex;align-items:center;padding-left:28px}
 .sb::before{content:"";width:26px;height:11px;background:#868686}
 .mark{position:absolute;left:-2px;top:59px;width:164px;height:24px;border:4px solid #ff2114;border-radius:4px}
 </style>
 <header><h2>项目管理器 (1)</h2><button aria-label="菜单"><svg width="10" height="10"><path d="M0 3h9l-4.500 5z"/></svg></button><button aria-label="固定"><svg width="9" height="10" fill="none" stroke="#000"><path d="M2.500 6V.5h4V6M0 6.500h9M4.500 7v3M5.500 1v5"/></svg></button><button aria-label="关闭"><svg width="9" height="9"><path d="M.5 .5l8 8M8.500 .5l-8 8" stroke="#000" stroke-width="1.500"/></svg></button></header>
 <section class="tree"><div class="node"><folder-icon></folder-icon>test</div><div class="kid"><i></i><span class="node sel"><folder-icon open></folder-icon>Folder1</span></div></section>
 <section class="list"><b class="h">名称</b><ul>${rows.map(r=>`<li><window-icon kind="${r[0]}"${r[1]==='Graph3'?' active':''}></window-icon><span>${r[1]}</span></li>`).join('')}</ul><div class="sb"></div><span class="mark"></span></section>`;
});

define('cluster-plot',()=>{
 const C={a:'#0000ff',b:'#2400db',c:'#4800b7',d:'#6d0092',e:'#91006e',f:'#b60049',g:'#da0024',h:'#ff0000'};
 const data=['edfga','gddga','ggbeb','dafgf','dafgf','caefh','eeaeh'];
 const X=i=>Math.round(158+i*137.4),Y=i=>Math.round(146+i*80.7);
 let cells='';
 data.forEach((r,j)=>[...r].forEach((c,i)=>cells+=`<rect x="${X(i)}" y="${Y(j)}" width="${X(i+1)-X(i)}" height="${Y(j+1)-Y(j)}" fill="${C[c]}"/>`));
 const names=['乙酸','乳酸','苹果酸','柠檬酸','琥珀酸','草酸','酒石酸'].map((n,j)=>`<text x="849" y="${Y(j)+47}" font-size="16">${n}</text>`).join('');
 const cn=[1,5,2,3,4].map((n,i)=>`<text transform="translate(${X(i)+74} 732) rotate(-90)" font-size="13" class="m">${n}</text>`).join('');
 const lg=['#fff',...Object.values(C),'#000'].map((c,i)=>`<rect x="940" y="${Math.round(142+i*32.9)}" width="29" height="33" fill="${c}"/>`).join('');
 const lt=['1.57','1.20','0.823','0.449','0.0750','-0.299','-0.672','-1.05','-1.42'].map((t,i)=>{const y=Math.round(142+(i+1)*32.9);return `<path d="M970 ${y}.5h10" stroke="#000"/><text class="m" x="985" y="${y+5}" font-size="13">${t}</text>`}).join('');
 return `<style>
 :host{display:block;flex:none;width:1056px;background:#fff;position:relative;overflow:hidden}
 svg{display:block;width:100%}
 .m{font-family:"Liberation Mono",monospace}
 .layers{display:flex;gap:2px;position:absolute;left:2px;top:2px}
 .layers button{width:28px;height:28px;border:solid;border-width:0 2px 2px 0;border-color:#808080;background:#bfbfbf;color:#fff;font:bold 24px/24px "Liberation Sans";padding:0}
 .layers button.on{color:#000;border-color:#bfbfbf;margin-left:-2px;width:30px}
 .lock{position:absolute;left:7px;top:37px}
 </style>
 <svg viewBox="0 0 1056 809" font-family="Noto Sans CJK SC" shape-rendering="crispEdges">
 ${cells}<path d="M158 711V146h687v565z" fill="none" stroke="#000" stroke-width="2"/>
 <path fill="none" stroke="#000" d="M227.500 146V96.500h137V146M502.500 146V93.500h137V146M296.500 96V64.500h274V93M433.500 64V50.500h343V146M158 187.500h-51v81h51M107 227.500h-34v121h85M158 469.500h-46v121h46M112 530.500h-59v142h105M73 288.500h-38v313h18"/>
 ${names}${cn}${lg}<path d="M940 142.500h29.500v328" fill="none" stroke="#000"/>${lt}
 <g fill="none" stroke="#ff2114" stroke-width="5" shape-rendering="auto"><rect x="186" y="709" width="622" height="55" rx="3"/><rect x="822" y="142" width="117" height="591" rx="3"/></g></svg>
 <div class="layers"><button>1</button><button>2</button><button class="on">3</button></div>
 <svg class="lock" style="width:18px;height:19px" viewBox="0 0 18 19" shape-rendering="crispEdges"><path d="M4 7V3l2-2h6l2 2v4" fill="#ccc" stroke="#000" stroke-width="2"/><path d="M1 7h15v11H1z" fill="#0f0" stroke="#000" stroke-width="2"/><path d="M5 9v7l7-4z"/></svg>`;
});

define('app-item',el=>`<style>
 :host{display:flex;flex-direction:column;align-items:center;height:113px;flex:none;font-size:18px;line-height:24px;text-align:center}
 :host([off]){color:#666}
 button{border:0;background:none;font:inherit;color:inherit;padding:0;display:flex;flex-direction:column;align-items:center;gap:3px}
 </style><button><slot></slot><span>${(el.getAttribute('name')||'').replace('/','<br>')}</span></button>`);
define('apps-window',()=>{
 const dot='<circle cx="39" cy="9" r="8" fill="#f00" stroke="#fff"/>';
 const S=s=>`<svg width="48" height="48" viewBox="0 0 48 48" fill="none">${s}</svg>`;
 const cards='M8 14h8v18H8zM13 18h8v18h-8zM18 22h8v18h-8z';
 let hm='';const hc=['#f7b3b9','#f9f9b8','#b3d9bf'];['01210','12121','01010','12121','21012'].forEach((r,j)=>[...r].forEach((c,i)=>hm+=`<path fill="${hc[c]}" d="M${10+i*7} ${10+j*7}h7v7h-7z"/>`));
 let gm='';['#d99','#9c9','#aad'].forEach((c,i)=>{gm+=`<path d="M${2+i*7} 2h4M${2+i*7} 6h4M${2+i*7} 10h4M${2+i*7} 15h4M${2+i*7} 20h4M${2+i*7} 25h4" stroke="${c}" stroke-width="2"/>`});
 const tab=(t,h,on)=>`<button class="${on?'on':''}" style="height:${h}px"><svg width="30" height="${h}"><path d="M30 .5L.5 15.500V${h-16}L30 ${h-1}" fill="${on?'#fff':'#f0f0f0'}" stroke="#777"/></svg><span>${t}</span></button>`;
 return `<style>
 :host{display:flex;flex-direction:column;box-sizing:border-box;border:2px solid;border-color:#f4f4f4 #777 #777 #f4f4f4;outline:1px solid #ccc;background:#f0f0f0;padding:1px}
 header{display:flex;align-items:center;height:33px;flex:none;background:#bdcbd9;padding:0 4px 0 3px;gap:9px}
 h2{font:bold 17px "Open Sans";margin:0;flex:1}
 header button{border:0;background:none;padding:0;display:flex}
 .b{flex:1;display:flex;min-height:0}
 .tabs{width:34px;flex:none;display:flex;flex-direction:column;align-items:flex-end}
 .nav{display:flex;flex-direction:column;align-items:center;height:67px;width:30px;justify-content:space-around;box-sizing:border-box;border-right:1px solid #888}
 .nav button{border:0;background:none;padding:0;display:flex}
 .tabs>button{display:grid;width:30px;padding:0;border:0;background:none;font:inherit;font-size:18px;margin-bottom:-8px;flex:none}
 .tabs>button>*{grid-area:1/1}
 .tabs>button.on{z-index:1;font-weight:bold}
 .tabs span{writing-mode:vertical-rl;text-orientation:sideways;line-height:24px;place-self:center;white-space:nowrap}
 .c{flex:1;display:flex;border:1px solid #888;overflow:hidden;margin-bottom:3px;min-width:0}
 .l{flex:1;background:#fff;padding:3px 33px 0 0;display:flex;flex-direction:column;min-width:0}
 .s{width:28px;flex:none;padding:28px 0 0 7px;box-sizing:border-box}
 .s::before{content:"";display:block;width:11px;height:286px;background:#858585}
 </style>
 <header><h2>Apps</h2><button aria-label="菜单"><svg width="10" height="10"><path d="M0 3h9l-4.500 5z"/></svg></button><button aria-label="最大化"><svg width="10" height="10" fill="none" stroke="#000"><path d="M.5 1h9v8.500h-9z"/></svg></button><button aria-label="关闭"><svg width="9" height="9"><path d="M.5 .5l8 8M8.500 .5l-8 8" stroke="#000" stroke-width="1.500"/></svg></button></header>
 <div class="b"><div class="tabs"><div class="nav">${['M0 .5h8M4 2l4 4H0z','M4 1l4 4H0z','M4 5l4-4H0z','M0 6.500h8M4 5l4-4H0z'].map((d,i)=>`<button aria-label="滚动${i+1}"><svg width="8" height="7"><path d="${d}" stroke="${i%3?'none':'#000'}" stroke-width=".8"/></svg></button>`).join('')}</div>
 ${tab('所有',64,1)}${tab('连接器',75)}${tab('Fitting',77)}${tab('Batch Processing',166)}</div>
 <div class="c"><div class="l">
 <app-item name="添加App">${S(`<path d="M1 2h40v39H1z" fill="#f4f9fc" stroke="#1b8fd0" stroke-width="2"/><path d="M0 0h42v6H0z" fill="#0e7cc4"/><path d="M3 8h14v18H3z" fill="#c6c8c8"/><path d="M20 10h8M22 17h12v10H22zM3 31h5M10 29h8v4h-8zM3 36h5M10 36h8v3h-8z" stroke="#bbb" stroke-width="1.500"/><circle cx="33" cy="33" r="13.500" fill="#e23b3e" stroke="#c2282c"/><path d="M31 25h5v6h6v5h-6v6h-5v-6h-6v-5h6z" fill="#fff"/>`+dot)}</app-item>
 <app-item name="Distributed/Batch Pro...">${S(`<path d="M0 0h48v48H0z" fill="#3cc0fb"/><path d="${cards}" transform="translate(-3 -3)" stroke="#e8f8ff" stroke-width="2" fill="#3cc0fb"/><path d="M20 10l14 13" stroke="#133a63" stroke-width="2.500"/><path d="M35 25l-8-3 5-5z" fill="#133a63"/><path d="M31 8l8-3 2 8-6 3z" fill="#e2836d"/><rect x="19" y="27" width="23" height="15" rx="2" fill="#3cc0fb" stroke="#fff" stroke-width="3"/><path d="M19 32h23M19 37h23M27 27v15M34 27v15" stroke="#fff" stroke-width="2"/>`)}</app-item>
 <app-item off name="Graph/Maker">${S(gm+'<path d="M5 40l17-14" stroke="#d6d6a4" stroke-width="7"/><path d="M37 11a10 10 0 1 0 4 15l-8 1-5-5 2-6z" fill="#d6d6a4"/><path d="M24 34h6v9h-6z" fill="#d9a6a6"/><path d="M33 31h6v12h-6z" fill="#a9d5ae"/><path d="M41 24h6v19h-6z" fill="#aaaad8"/>')}</app-item>
 <app-item off name="Heat Map/with Den...">${S(hm+'<path d="M12 9V6h8v3M16 6V1h26v8M28 9V6h9v3M32 6V3h10M9 14H4v9h5M4 18H2v22h4M9 33H5v10h5" stroke="#aaa" stroke-width="1.500"/>')}</app-item>
 <app-item name="Peak/Deconvolu...">${S('<path d="M0 0h48v48H0z" fill="#cbdcee"/><path d="M3 35c7-2 9-25 13-25s8 24 16 25M20 35c8-2 12-19 16-18s6 14 10 18M12 35c8-2 12-11 16-11s8 9 14 11" stroke="#159a42" stroke-width="2"/><path d="M1 35C9 34 12 8 16 8s7 13 12 15c5-1 8-8 11-4s5 13 8 16" stroke="#dc1f2c" stroke-width="2.500"/><path d="M0 37h48" stroke="#222" stroke-width="3"/>'+dot)}</app-item>
 <app-item name="">${S('<text x="24" y="13" font-family="Liberation Serif" font-style="italic" font-weight="bold" font-size="12" fill="#333" text-anchor="middle">y = f(x)</text><g stroke="#17425e" stroke-width="2"><path d="M3 28h14v14H3z" fill="#f2b90c"/><path d="M31 29h14v13H31z" fill="#0f9d82"/><path d="M17 16h14v26H17z" fill="#f00c18"/></g><g font-size="9" fill="#654" text-anchor="middle" font-family="Liberation Sans"><text x="10" y="39">2</text><text x="24" y="33">1</text><text x="38" y="39">3</text></g>')}</app-item>
 </div><div class="s"></div></div></div>`;
});

define('status-bar',()=>`<style>
 :host{display:flex;align-items:center;height:28px;flex:none;background:#f0f0f0;border-top:1px solid #d4d4dc;font-size:16px;white-space:nowrap;padding-left:49px}
 .l{flex:1}span{padding:0 5px;border-left:1px solid #d0d0d0;line-height:26px}
 span.l{border:0;padding:0;font-size:17px}
 span:last-child{padding-right:2px}
 span svg{display:block;margin:8px 6px 10px 2px}
 </style><span class="l">&lt;&lt; 【开始】菜单 (F1)</span><span>--</span><span><svg width="11" height="8"><path d="M1 0v8" stroke="#000" stroke-width="2"/><path d="M1 0h10v6H1z" fill="#f00"/></svg></span><span>AU : 开</span><span>Light Grids</span><span>1:[Clustergram]"Column Cluster Plot Data"!Col("距离")[1:20]</span><span>3:[Graph3]Column!1</span><span>弧度</span>`);

define('origin-app',()=>`<style>
 :host{display:flex;flex-direction:column;height:100vh;min-width:0;position:relative;overflow:hidden}
 .row{display:flex;height:33px;flex:none;background:linear-gradient(90deg,#ebecfb,#f3f6fd);overflow:hidden}
 main{display:flex;flex:1;min-height:0;position:relative}
 .tools{width:36px;flex:none;display:flex;flex-direction:column;background:#ebedfb;align-items:flex-start}
 .tools tool-bar:first-child{width:35px}
 .tools tool-bar{width:26px;overflow:hidden}
 .mid{flex:1;display:flex;flex-direction:column;min-width:0}
 .work{flex:1;display:flex;background:#c0c0c0;min-height:0;border:1px solid;border-color:#777 #eee #eee #777}
 .bottom{height:34px;display:flex;background:#eff2fc;padding-top:1px;box-sizing:border-box}
 .right{width:27px;flex:none;background:linear-gradient(90deg,#f7faff,#b4b5cc);display:flex;flex-direction:column;justify-content:space-between;overflow:hidden;margin-bottom:24px;padding:10px 0 12px;box-sizing:border-box}
 apps-window{position:absolute;right:5px;top:50px;width:220px;height:666px}
 .task{height:10px;flex:none;background:#222425;border-top:1px solid #444;box-sizing:border-box;display:flex}
 .task i{width:58px;height:5px;margin:4px 0 0 819px;background:#3a3b3c;border-radius:4px 4px 0 0}
 .ball{position:absolute;left:1px;bottom:10px;width:46px;height:46px}
 .swatch{width:34px;height:14px;border:1px solid #aaa;margin:0 14px 0 2px;border-right-color:#fff;border-bottom-color:#fff}
 .tt{width:30px;height:24px}
 .ln{width:30px;margin-left:4px;height:4px;background:#222}
 </style>
 <title-bar></title-bar>
 <div class="row">
  <tool-bar><tool-set items="new newfolder newbook newexcel newgraph newmatrix newfx newlayout newnote new3d | open opentpl save savetpl | impwiz imp1 imp2 impxl | reimp run |"></tool-set><combo-box live style="--w:90px" label="缩放" value="100%"></combo-box><tool-set items="| print slide ppt film | design windows | tree | !find findplot results script gear | addcol"></tool-set></tool-bar>
  <tool-bar><tool-set items="rows cols | arrR arrr | arrR2 arrr2"></tool-set></tool-bar>
  <tool-bar><tool-set items="sumcol sumrow sort | n1 n2 | b1 b2 b3 | fil fil2 fil3"></tool-set></tool-bar>
  <tool-bar><tool-set items="addlay addgrid"></tool-set></tool-bar>
  <tool-bar><tool-set items="db1 db2 db3 db4 db5 db6"></tool-set></tool-bar>
 </div>
 <menu-bar></menu-bar>
 <div class="row">
  <tool-bar><tool-set items="cut copy paste"></tool-set></tool-bar>
  <tool-bar><combo-box style="--w:193px" label="字体" value="默认: 宋体"><svg class="tt" viewBox="0 0 30 24"><text x="5" y="15" font-family="Liberation Serif" font-weight="bold" font-size="14" fill="#888">T</text><text x="15" y="20" font-family="Liberation Serif" font-weight="bold" font-size="18">T</text></svg></combo-box><combo-box style="--w:90px" label="字号" value="0"></combo-box><tool-set items="tB tI tU tsup tsub tss tab tA ta al> vl> fc>"></tool-set></tool-bar>
  <tool-bar><tool-set wide items="fill> pen>"></tool-set><combo-box style="--w:91px" label="线型" value="实线"><i class="ln"></i></combo-box><combo-box style="--w:90px" label="线宽" value="0"></combo-box><i class="swatch"></i><combo-box style="--w:90px" label="图案" value="0"></combo-box><tool-set wide items="hatch> bord> cells pal> bulb"></tool-set></tool-bar>
  <tool-bar><tool-set items="wave | X Y Z err abc home | G S | first prev next last"></tool-set></tool-bar>
  <tool-bar><tool-set items="M Xm | mv1 mv2 | lock"></tool-set></tool-bar>
  <tool-bar><tool-set items="impwiz imp1 imp2 impxl | cyc1 cyc2"></tool-set></tool-bar>
 </div>
 <main>
  <side-tabs></side-tabs>
  <project-panel></project-panel>
  <div class="tools"><tool-bar vertical><tool-set vertical items="!ptr zin zout cross target> dsel msk> msk2> dots T lab arw> line> rect> hand sqa> gr> pan cube"></tool-set></tool-bar><tool-bar vertical><tool-set vertical items="flag4 rad leg ast note clk fst tbl"></tool-set></tool-bar></div>
  <div class="mid"><div class="work"><cluster-plot></cluster-plot></div>
   <div class="bottom">
    <tool-bar><tool-set narrow items="curve> scat> lsc> bars> mix> box> area> radar> stock> cubes"></tool-set></tool-bar>
    <tool-bar><tool-set narrow items="c1> | c2> c3> c4> c5 c6"></tool-set></tool-bar>
    <tool-bar><tool-set items="cat catx | mask mg mr | mk"></tool-set></tool-bar>
    <tool-bar><tool-set items="r1 r2 r3 r4 r5 r6 r7 r8 r9 r10 r11"></tool-set><combo-box style="--w:90px" label="角度" value="10"></combo-box></tool-bar>
   </div></div>
  <div class="right"><tool-set vertical items="steps redar"></tool-set><tool-set vertical items="obj | grp ugrp"></tool-set></div>
  <apps-window></apps-window>
 </main>
 <status-bar></status-bar>
 <div class="task"><i></i></div>
 <origin-logo class="ball"></origin-logo>`);
</script>
</body>
</html>
